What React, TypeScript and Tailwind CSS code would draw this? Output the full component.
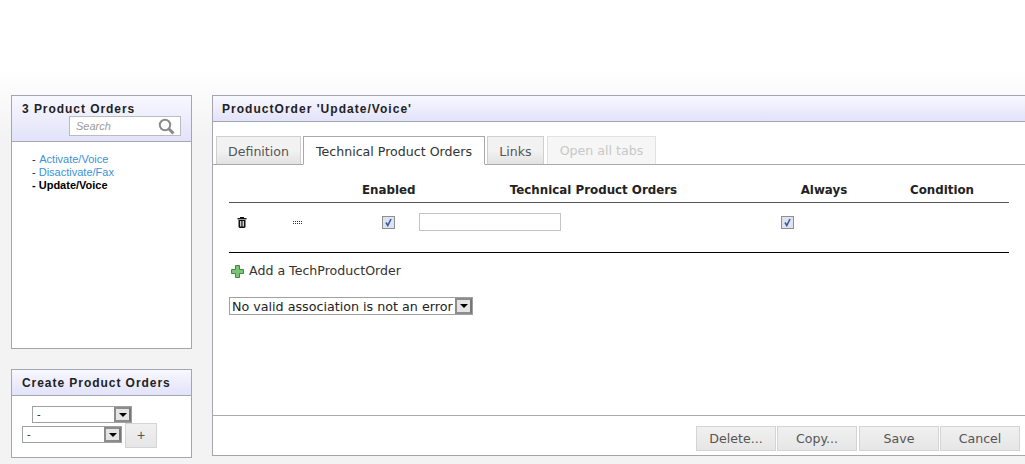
const tahoma = { fontFamily: '"DejaVu Sans", sans-serif' }

const headerCls = 'bg-gradient-to-b from-[#f8f8ff] to-[#e2e2fa] border-b border-[#a5a5ad]'
const titleCls = "font-['Liberation_Sans',sans-serif] text-[12px] font-bold tracking-[0.95px] text-[#222] leading-[14px]"
const tabCls = "h-[28px] pt-[3px] flex items-center justify-center border border-[#cfcfcf] border-b-0 bg-gradient-to-b from-[#f2f2f2] via-[#f2f2f2] to-[#e2e2e2] text-[#555]"
const btnCls = 'h-[25px] border border-[#d4d4d4] bg-gradient-to-b from-[#f0f0f0] to-[#e6e6e6] text-[#555] flex items-center justify-center'

function FakeSelect({ width, label, big }: { width: string; label: string; big?: boolean }) {
  return (
    <div className={`${width} ${big ? 'h-[18px]' : 'h-[17px]'} border border-[#a0a0a0] bg-white flex items-center justify-between`}>
      <span className={big ? 'pl-[2px] pt-[2px] text-[12.7px] text-[#222]' : 'pl-[4px] text-[11px] text-[#222]'}>{label}</span>
      <span className="w-[17px] h-full border-2 border-[#8c8c8c] border-r-[#777] bg-[#e4e4e4] flex items-center justify-center">
        <span className="w-0 h-0 border-l-[4px] border-r-[4px] border-t-[4px] border-l-transparent border-r-transparent border-t-black" />
      </span>
    </div>
  )
}

function Check() {
  return (
    <span className="w-[13px] h-[13px] border border-[#8e8f8f] bg-[#dfe3ef] flex items-center justify-center">
      <svg width="9" height="9" viewBox="0 0 9 9" fill="none">
        <path d="M2 4.5 L3.8 7.5 L7 1" stroke="#3a5aa5" strokeWidth="1.6" />
      </svg>
    </span>
  )
}

function Trash() {
  return (
    <svg width="10" height="11" viewBox="0 0 10 11" fill="#111">
      <rect x="3" y="0" width="4" height="1" />
      <rect x="0.5" y="1" width="9" height="1.4" />
      <path d="M1.5 3 H8.5 V10 L7.5 11 H2.5 L1.5 10 Z M3 4 V9.5 H3.8 V4 Z M4.7 4 V9.5 H5.4 V4 Z M6.2 4 V9.5 H7 V4 Z" fillRule="evenodd" />
    </svg>
  )
}

function Dots() {
  return (
    <svg width="10" height="3" viewBox="0 0 10 3" fill="#333">
      {[0, 2, 4, 6, 8].map(x => (
        <g key={x}>
          <rect x={x} y="0" width="1" height="1" />
          <rect x={x} y="2" width="1" height="1" />
        </g>
      ))}
    </svg>
  )
}

export default function App() {
  return (
    <div
      className="w-[1025px] h-[464px] overflow-hidden bg-gradient-to-b from-white from-[15%] to-[#f3f3f3] to-[30%] pt-[95px] pl-[11px] flex gap-[20px]"
      style={tahoma}
    >
      <div className="w-[181px] shrink-0 flex flex-col">
        <div className="h-[254px] border border-[#a5a5ad] bg-white">
          <div className={`${headerCls} h-[46px] pt-[6px] pl-[10px] pr-[10px]`}>
            <p className={titleCls}>3 Product Orders</p>
            <div className="ml-[47px] h-[20px] border border-[#bcbcbc] bg-white flex items-center justify-between pl-[6px] pr-[5px]">
              <span className="font-['Liberation_Sans',sans-serif] italic text-[11px] text-[#999]">Search</span>
              <svg width="17" height="17" viewBox="0 0 17 17" fill="none" stroke="#8a8a8a">
                <circle cx="7" cy="7" r="5.2" strokeWidth="2" />
                <path d="M11 11 L15.5 15.5" strokeWidth="3" />
              </svg>
            </div>
          </div>
          <ul className="pt-[11px] pl-[20px] font-['Liberation_Sans',sans-serif] text-[11px] leading-[13px]">
            <li className="text-[#222]">- <span className="ml-[0.5px] text-[#3a93d8]">Activate/Voice</span></li>
            <li className="text-[#222]">- <span className="text-[#3a93d8]">Disactivate/Fax</span></li>
            <li className="font-bold text-black">- Update/Voice</li>
          </ul>
        </div>
        <div className="mt-[20px] h-[89px] border border-[#a5a5ad] bg-white">
          <div className={`${headerCls} h-[26px] pt-[6px] pl-[10px]`}>
            <p className={titleCls}>Create Product Orders</p>
          </div>
          <div className="pt-[10px] font-['Liberation_Sans',sans-serif]">
            <div className="ml-[20px]">
              <FakeSelect width="w-[100px]" label="-" />
            </div>
            <div className="ml-[10px] mt-[3px] flex items-start gap-[3px]">
              <FakeSelect width="w-[100px]" label="-" />
              <div className={`${btnCls} w-[32px] h-[24px] -mt-[3px] text-[14px] text-[#3a5a45] font-['Liberation_Sans',sans-serif]`}>+</div>
            </div>
          </div>
        </div>
      </div>

      <div className="flex-1 h-[361px] border border-r-0 border-[#a5a5ad] bg-white flex flex-col">
        <div className={`${headerCls} h-[26px] pt-[6px] pl-[9px]`}>
          <p className={`${titleCls} tracking-[1.03px]`}>ProductOrder 'Update/Voice'</p>
        </div>

        <div className="mt-[14px] h-[29px] border-b border-[#a9a9a9] flex items-end pl-[3px] gap-[2px] text-[12.6px]">
          <div className={`${tabCls} w-[85px]`}>Definition</div>
          <div className="w-[182px] h-[29px] pt-[3px] -mb-px border border-[#a9a9a9] border-b-white bg-white flex items-center justify-center text-[#333]">
            Technical Product Orders
          </div>
          <div className={`${tabCls} w-[57px]`}>Links</div>
          <div className="ml-px w-[109px] h-[28px] pt-[2px] border border-[#e2e2e2] border-b-0 bg-[#f6f6f6] flex items-center justify-center text-[#c8c8c8]">
            Open all tabs
          </div>
        </div>

        <div className="ml-[16px] w-[780px] flex-1 text-[11.85px] text-[#222]">
          <div className="h-[38px] border-b border-[#555] flex items-end pb-[2px] font-bold">
            <span className="w-[133px]" />
            <span className="w-[52px] text-center">Enabled</span>
            <span className="w-[359px] text-center">Technical Product Orders</span>
            <span className="w-[102px] text-center">Always</span>
            <span className="w-[134px] text-center">Condition</span>
          </div>
          <div className="h-[50px] border-b border-black flex items-center pb-[10px]">
            <span className="w-[63px] pl-[8px]"><Trash /></span>
            <span className="w-[90px] pl-px"><Dots /></span>
            <Check />
            <span className="ml-[24px] -mt-px w-[142px] h-[18px] border border-[#c4c4c4] bg-white" />
            <span className="ml-[220px]"><Check /></span>
          </div>
          <div className="mt-[10px] flex items-center h-[16px] text-[12.6px] text-[#333]">
            <svg width="13" height="13" viewBox="0 0 13 13" className="ml-[2px] mr-[5px]">
              <path d="M4.5 0.5 H8.5 V4.5 H12.5 V8.5 H8.5 V12.5 H4.5 V8.5 H0.5 V4.5 H4.5 Z" fill="#7cc576" stroke="#3d8b3d" />
            </svg>
            Add a TechProductOrder
          </div>
          <div className="mt-[18px]">
            <FakeSelect width="w-[244px]" label="No valid association is not an error" big />
          </div>
        </div>

        <div className="h-[40px] border-t border-[#a9a9a9] flex justify-end items-start pt-[10px] pr-[5px] gap-[1px] text-[12.6px]">
          <div className={`${btnCls} w-[80px] pt-px`}>Delete...</div>
          <div className={`${btnCls} w-[80px] pt-px`}>Copy...</div>
          <div className={`${btnCls} w-[80px] ml-[1px] pt-px`}>Save</div>
          <div className={`${btnCls} w-[80px] pt-px`}>Cancel</div>
        </div>
      </div>
    </div>
  )
}
